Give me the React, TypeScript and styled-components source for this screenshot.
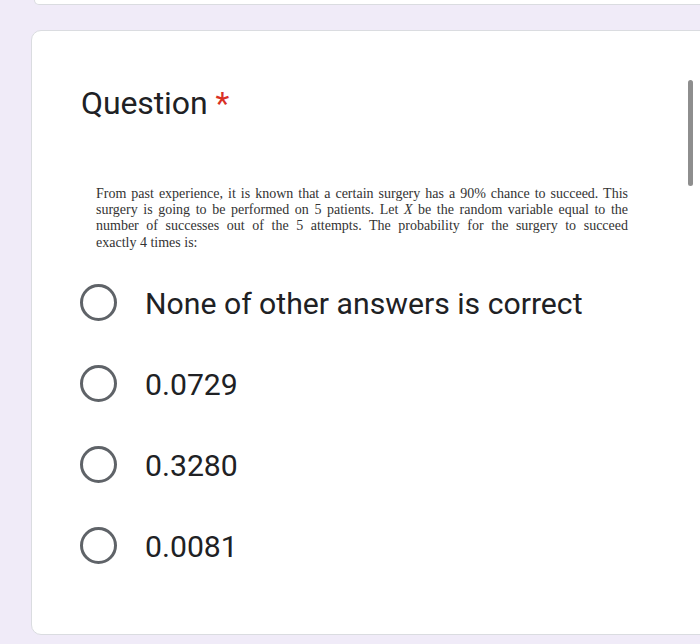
import React from "react";
import styled, { createGlobalStyle } from "styled-components";

const GlobalStyle = createGlobalStyle`
  html, body {
    margin: 0;
    padding: 0;
    background: #f0ebf8;
    overflow: hidden;
  }
  body {
    font-family: Roboto, "Noto Sans", Arial, sans-serif;
  }
`;

const Page = styled.div`
  position: relative;
  width: 700px;
  height: 644px;
  overflow: hidden;
  padding-left: 31px;
  box-sizing: border-box;
  display: flex;
  flex-direction: column;
`;

const PrevCard = styled.div`
  width: 690px;
  height: 4px;
  background: #fff;
  border: 1px solid #dadce0;
  border-top: none;
  border-radius: 0 0 10px 10px;
  margin-left: 3px;
  flex-shrink: 0;
`;

const QuestionCard = styled.div`
  margin-top: 25px;
  width: 690px;
  height: 605px;
  flex-shrink: 0;
  box-sizing: border-box;
  background: #fff;
  border: 1px solid #dadce0;
  border-radius: 10px;
  padding: 53px 0 0 48px;
  display: flex;
  flex-direction: column;
`;

const Title = styled.div`
  font-size: 32px;
  line-height: 38px;
  color: #202124;
  padding-left: 1px;
  letter-spacing: -0.1px;
`;

const Required = styled.span`
  color: #d93025;
  margin-left: 8px;
`;

const Problem = styled.div`
  margin: 64px 0 0 16px;
  width: 532px;
  font-family: "Liberation Serif", "Times New Roman", serif;
  font-size: 14px;
  line-height: 16.2px;
  color: #333333;
`;

const ProblemLine = styled.div<{ $last?: boolean }>`
  text-align: ${(p) => (p.$last ? "left" : "justify")};
  text-align-last: ${(p) => (p.$last ? "left" : "justify")};
  white-space: nowrap;
`;

const Options = styled.div`
  margin-top: 11px;
  display: flex;
  flex-direction: column;
`;

const Option = styled.label`
  height: 81px;
  display: flex;
  align-items: center;
  cursor: pointer;
`;

const Radio = styled.span`
  width: 37px;
  height: 37px;
  box-sizing: border-box;
  border: 3.5px solid #5f6368;
  border-radius: 50%;
  flex-shrink: 0;
`;

const OptionText = styled.span`
  margin-left: 28px;
  padding-top: 3px;
  font-size: 30.2px;
  color: #202124;
`;

const Scrollbar = styled.div`
  position: absolute;
  left: 688px;
  top: 80px;
  width: 5px;
  height: 106px;
  border-radius: 3px;
  background: #8e8e8e;
`;

const lines = [
  "From past experience, it is known that a certain surgery has a 90% chance to succeed. This",
  "surgery is going to be performed on 5 patients. Let X be the random variable equal to the",
  "number of successes out of the 5 attempts. The probability for the surgery to succeed",
  "exactly 4 times is:",
];

const answers = ["None of other answers is correct", "0.0729", "0.3280", "0.0081"];

const renderLine = (text: string) => {
  const parts = text.split(" X ");
  if (parts.length === 1) return text;
  return (
    <>
      {parts[0]} <i>X</i> {parts[1]}
    </>
  );
};

export default function App() {
  return (
    <>
      <GlobalStyle />
      <Page>
        <PrevCard />
        <QuestionCard>
          <Title>
            Question<Required>*</Required>
          </Title>
          <Problem>
            {lines.map((line, i) => (
              <ProblemLine key={i} $last={i === lines.length - 1}>
                {renderLine(line)}
              </ProblemLine>
            ))}
          </Problem>
          <Options>
            {answers.map((a) => (
              <Option key={a}>
                <Radio />
                <OptionText>{a}</OptionText>
              </Option>
            ))}
          </Options>
        </QuestionCard>
        <Scrollbar />
      </Page>
    </>
  );
}
